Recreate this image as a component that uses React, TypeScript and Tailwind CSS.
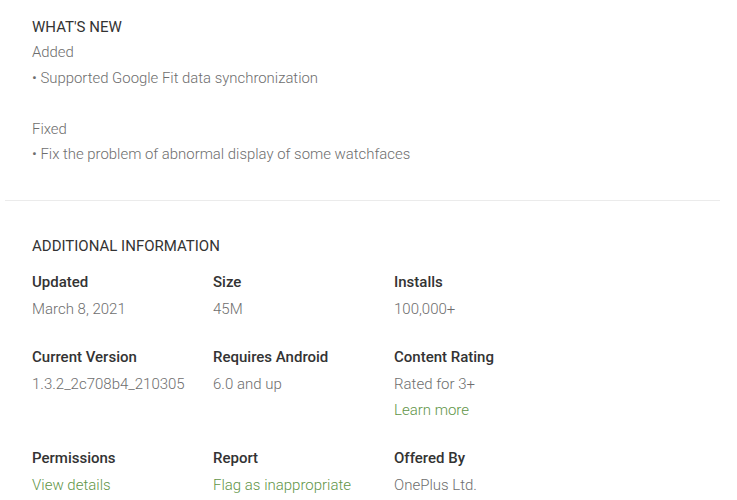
import React from "react";

const Cell = ({ label, children }: { label: string; children: React.ReactNode }) => (
  <div className="mb-[21px]">
    <div className="text-[15px] leading-[28px] font-medium text-[#333333]">{label}</div>
    {children}
  </div>
);

const Val = ({ children }: { children: React.ReactNode }) => (
  <div className="text-[15px] leading-[26px] font-light text-[#6e6e6e]">{children}</div>
);

const Link = ({ children }: { children: React.ReactNode }) => (
  <div className="text-[15px] leading-[26px] font-light text-[#5f9548]">{children}</div>
);

export default function App() {
  return (
    <div className="w-[737px] h-[500px] overflow-hidden bg-white" style={{ fontFamily: "Roboto, 'Liberation Sans', sans-serif" }}>
      <div className="pl-[32px] pt-[14px]">
        <div className="text-[15px] leading-[26px] text-[#333333] uppercase">What's New</div>
        <div className="text-[14.9px] leading-[25.6px] font-light text-[#6e6e6e]">
          <div>Added</div>
          <div>• Supported Google Fit data synchronization</div>
          <div>&nbsp;</div>
          <div>Fixed</div>
          <div>• Fix the problem of abnormal display of some watchfaces</div>
        </div>
      </div>
      <div className="ml-[5px] w-[715px] h-px bg-[#ebebeb] mt-[32px]" />
      <div className="pl-[32px] pt-[32px]">
        <div className="text-[15px] leading-[26px] text-[#333333] uppercase">Additional Information</div>
        <div className="grid grid-cols-[181px_181px_181px] mt-[9px]">
          <Cell label="Updated"><Val>March 8, 2021</Val></Cell>
          <Cell label="Size"><Val>45M</Val></Cell>
          <Cell label="Installs"><Val>100,000+</Val></Cell>
          <Cell label="Current Version"><Val>1.3.2_2c708b4_210305</Val></Cell>
          <Cell label="Requires Android"><Val>6.0 and up</Val></Cell>
          <Cell label="Content Rating"><Val>Rated for 3+</Val><Link>Learn more</Link></Cell>
          <Cell label="Permissions"><Link>View details</Link></Cell>
          <Cell label="Report"><Link>Flag as inappropriate</Link></Cell>
          <Cell label="Offered By"><Val>OnePlus Ltd.</Val></Cell>
        </div>
      </div>
    </div>
  );
}
